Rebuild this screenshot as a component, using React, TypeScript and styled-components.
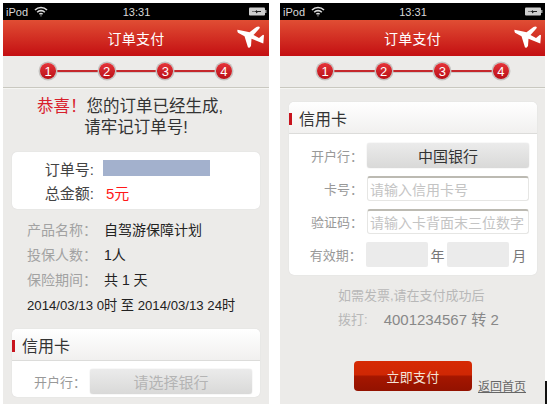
import React from "react";
import styled, { createGlobalStyle } from "styled-components";

const Global = createGlobalStyle`
  html, body { margin: 0; padding: 0; background: #fff; }
  body { width: 547px; height: 404px; overflow: hidden; font-family: "Liberation Sans", "Noto Sans CJK SC", sans-serif; }
  * { box-sizing: border-box; }
`;
const Stage = styled.div`
  display: flex; gap: 11px; height: 404px; padding: 3px 0 0 3px; overflow: hidden; width: 547px; position: relative;
`;
const CropMark = styled.div`
  position: absolute; right: 0; top: 381px; bottom: 0; width: 2px; background: #111;
`;
const Phone = styled.div<{ $width: number }>`
  flex: 0 0 ${p => p.$width}px; height: 401px; background: #ecebe9; display: flex; flex-direction: column; overflow: hidden;
`;
const StatusBar = styled.div`
  flex: 0 0 17px; background: #000; color: #d8d8d8; font-size: 11px; display: grid; grid-template-columns: 1fr auto 1fr; align-items: center; padding: 0 2px 0 3px;
`;
const StatusLeft = styled.div`display: flex; align-items: center; gap: 6px;`;
const StatusRight = styled.div`display: flex; justify-content: flex-end;`;
const Header = styled.div`
  flex: 0 0 36px; background: linear-gradient(#e04e34, #c40f12); color: #fff; font-size: 14px; display: flex; align-items: center; justify-content: center; position: relative; letter-spacing: .3px;
`;
const Plane = styled.svg`position: absolute; left: 234px; top: 6px;`;
const Steps = styled.div`
  flex: 0 0 32px; display: flex; align-items: center; padding-left: 37px; border-bottom: 1px solid #c9c8c0; box-shadow: 0 1px 0 #f5f5f3;
`;
const StepTrack = styled.div`
  width: 192px; display: flex; justify-content: space-between; position: relative; margin-top: -1px;
  &::before { content: ""; position: absolute; left: 8px; right: 8px; top: 7px; height: 2px; background: #c5282c; box-shadow: 0 1px 0 #ccc; }
`;
const Step = styled.span`
  width: 16px; height: 16px; border-radius: 50%; background: linear-gradient(#e5343a, #b90f16); color: #fff; font-size: 13px; display: flex; align-items: center; justify-content: center; box-shadow: 0 0 0 1.5px #c4c2c0; position: relative;
`;
const Congrats = styled.div`
  margin-top: 8px; text-align: center; font-size: 16.5px; line-height: 21px; color: #333;
`;
const CongratsLine = styled.div<{ $shift?: number }>`
  padding-right: ${p => p.$shift ?? 0}px; white-space: nowrap;
`;
const Red = styled.span`color: #d8202c;`;
const OrderCard = styled.div`
  margin: 14px 9px 0; height: 57px; background: #fff; border-radius: 5px; padding: 4px 0 0 0; display: grid; grid-template-columns: 82px 1fr; grid-auto-rows: 24px; align-items: center; box-shadow: 0 0 1px #ccc;
`;
const OrderLabel = styled.span`font-size: 15px; color: #444; text-align: right; white-space: nowrap;`;
const OrderValue = styled.span`
  font-size: 15px; color: #ff1818; padding-left: 12px; display: flex; align-items: center;
`;
const Mask = styled.span`display: block; width: 107px; height: 16px; background: #a3b1cd; margin-left: -3px;`;
const Info = styled.div`
  margin: 7px 0 0 24px; font-size: 14px; color: #222;
`;
const InfoRow = styled.div`display: flex; height: 25.33px; align-items: center;`;
const DateRow = styled(InfoRow)`font-size: 13.2px; white-space: nowrap;`;
const InfoLabel = styled.span`width: 77px; color: #a2a2a2; white-space: nowrap;`;
const Card = styled.div<{ $top: number }>`
  margin: ${p => p.$top}px 0 0 9px; width: 248px; background: #fff; border-radius: 5px; box-shadow: 0 0 1px #ccc; flex: 0 0 auto;
`;
const CardHead = styled.div`
  height: 32px; background: linear-gradient(#fff, #f1f0ef); border-bottom: 1px solid #dcdcda; border-radius: 5px 5px 0 0; font-size: 16px; color: #333; display: flex; align-items: center; padding-left: 10px; position: relative;
  &::before { content: ""; position: absolute; left: 0; top: 11px; width: 3px; height: 12px; background: #c8141e; }
`;
const CardBody = styled.div<{ $top: number; $bottom: number }>`padding: ${p => p.$top}px 8px ${p => p.$bottom}px 0; display: flex; flex-direction: column; gap: 8px;`;
const FormRow = styled.div`display: flex; align-items: center; height: 25px;`;
const FormLabel = styled.span`width: 78px; font-size: 13px; color: #999; text-align: right; padding-right: 4px; white-space: nowrap;`;
const BankButton = styled.div<{ $active?: boolean }>`
  width: 162px; height: 25px; border-radius: 3px; background: linear-gradient(#ebebeb, #d9d9d8); box-shadow: 0 0 1px #bbb; display: flex; align-items: center; justify-content: center; font-size: 15px; color: ${p => (p.$active ? "#333" : "#b4b4b4")};
`;
const Field = styled.div`
  width: 162px; height: 25px; border: 1px solid #e6e6e4; border-top: 2px solid #bcbab2; border-radius: 3px; background: #fff; font-size: 14px; color: #c4c4c4; display: flex; align-items: center; padding-left: 2px; white-space: nowrap; overflow: hidden;
`;
const DateBox = styled.div`width: 63px; height: 25px; background: #ebebeb; border-radius: 2px;`;
const DateUnit = styled.span`width: 20px; text-align: center; font-size: 14px; color: #777;`;
const Hint = styled.div<{ $top: number }>`margin: ${p => p.$top}px 0 0 58px; font-size: 13px; color: #b8b8b8; height: 24px; display: flex; align-items: center; white-space: nowrap;`;
const HintTel = styled.span`color: #888; font-size: 15px; margin-left: 16px;`;
const Footer = styled.div`position: relative; margin-top: 31px; height: 30px;`;
const PayButton = styled.div`
  position: absolute; left: 74px; top: 0; width: 118px; height: 30px; border-radius: 4px; background: linear-gradient(#d62a04, #cf2704 45%, #a51600 52%, #931200); color: #f4e4d8; font-size: 13px; display: flex; align-items: center; justify-content: center; letter-spacing: .3px;
`;
const HomeLink = styled.a`
  position: absolute; left: 198px; top: 16px; font-size: 12px; color: #666; text-decoration: underline;
`;

const Wifi = () => (
  <svg width="14" height="11" viewBox="0 0 14 11" fill="none" stroke="#ddd" strokeWidth="1.6">
    <path d="M1 4a8.5 8.5 0 0 1 12 0" />
    <path d="M3.2 6.2a5.4 5.4 0 0 1 7.6 0" />
    <path d="M5.4 8.3a2.3 2.3 0 0 1 3.2 0" />
    <circle cx="7" cy="9.8" r=".6" fill="#ddd" stroke="none" />
  </svg>
);
const Battery = () => (
  <svg width="18" height="9" viewBox="0 0 18 9">
    <rect x="0" y="0.5" width="16" height="8" rx="1" fill="#cfcfcf" />
    <rect x="16" y="3" width="1.5" height="3" fill="#999" />
    <path d="M3 4.5h3l2-1.500v1h4v1h-3l-2 1.500v-1.500H3z" fill="#222" />
  </svg>
);
const PlaneIcon = () => (
  <Plane width="28" height="24" viewBox="0 0 28 24">
    <path
      fill="#fff"
      d="M0.500 3.800 L8 5.300 L12.500 6.200 L19.500 1 C20.500 .3 22.300 .3 22.700 1 C23 1.800 22.400 2.600 21.500 3.500 L16.500 9 L22 12 L26 8.800 L27 9.200 L26.300 17.500 L25 17 L14.500 12.800 L14 20 L12.500 21.800 L11 21.500 L7.500 10.300 L1 6.800 Q0 5 .5 3.800 Z"
    />
  </Plane>
);

const PhoneTop = () => (
  <>
    <StatusBar>
      <StatusLeft>iPod <Wifi /></StatusLeft>
      <span>13:31</span>
      <StatusRight><Battery /></StatusRight>
    </StatusBar>
    <Header>订单支付<PlaneIcon /></Header>
    <Steps>
      <StepTrack>
        {[1, 2, 3, 4].map(n => <Step key={n}>{n}</Step>)}
      </StepTrack>
    </Steps>
  </>
);

export default function App() {
  return (
    <>
      <Global />
      <Stage>
        <Phone $width={266}>
          <PhoneTop />
          <Congrats>
            <CongratsLine $shift={12}><Red>恭喜！</Red>您的订单已经生成,</CongratsLine>
            <CongratsLine>请牢记订单号!</CongratsLine>
          </Congrats>
          <OrderCard>
            <OrderLabel>订单号:</OrderLabel>
            <OrderValue><Mask /></OrderValue>
            <OrderLabel>总金额:</OrderLabel>
            <OrderValue>5元</OrderValue>
          </OrderCard>
          <Info>
            <InfoRow><InfoLabel>产品名称：</InfoLabel>自驾游保障计划</InfoRow>
            <InfoRow><InfoLabel>投保人数：</InfoLabel>1人</InfoRow>
            <InfoRow><InfoLabel>保险期间：</InfoLabel>共 1 天</InfoRow>
            <DateRow>2014/03/13 0时 至 2014/03/13 24时</DateRow>
          </Info>
          <Card $top={12}>
            <CardHead>信用卡</CardHead>
            <CardBody $top={8} $bottom={3}>
              <FormRow>
                <FormLabel>开户行：</FormLabel>
                <BankButton>请选择银行</BankButton>
              </FormRow>
            </CardBody>
          </Card>
        </Phone>
        <Phone $width={265}>
          <PhoneTop />
          <Card $top={14}>
            <CardHead>信用卡</CardHead>
            <CardBody $top={9} $bottom={8}>
              <FormRow>
                <FormLabel>开户行：</FormLabel>
                <BankButton $active>中国银行</BankButton>
              </FormRow>
              <FormRow>
                <FormLabel>卡号：</FormLabel>
                <Field>请输入信用卡号</Field>
              </FormRow>
              <FormRow>
                <FormLabel>验证码：</FormLabel>
                <Field>请输入卡背面末三位数字</Field>
              </FormRow>
              <FormRow>
                <FormLabel>有效期：</FormLabel>
                <DateBox /><DateUnit>年</DateUnit><DateBox /><DateUnit>月</DateUnit>
              </FormRow>
            </CardBody>
          </Card>
          <Hint $top={7}>如需发票,请在支付成功后</Hint>
          <Hint $top={0}>拨打:<HintTel>4001234567 转 2</HintTel></Hint>
          <Footer>
            <PayButton>立即支付</PayButton>
            <HomeLink>返回首页</HomeLink>
          </Footer>
        </Phone>
        <CropMark />
      </Stage>
    </>
  );
}
